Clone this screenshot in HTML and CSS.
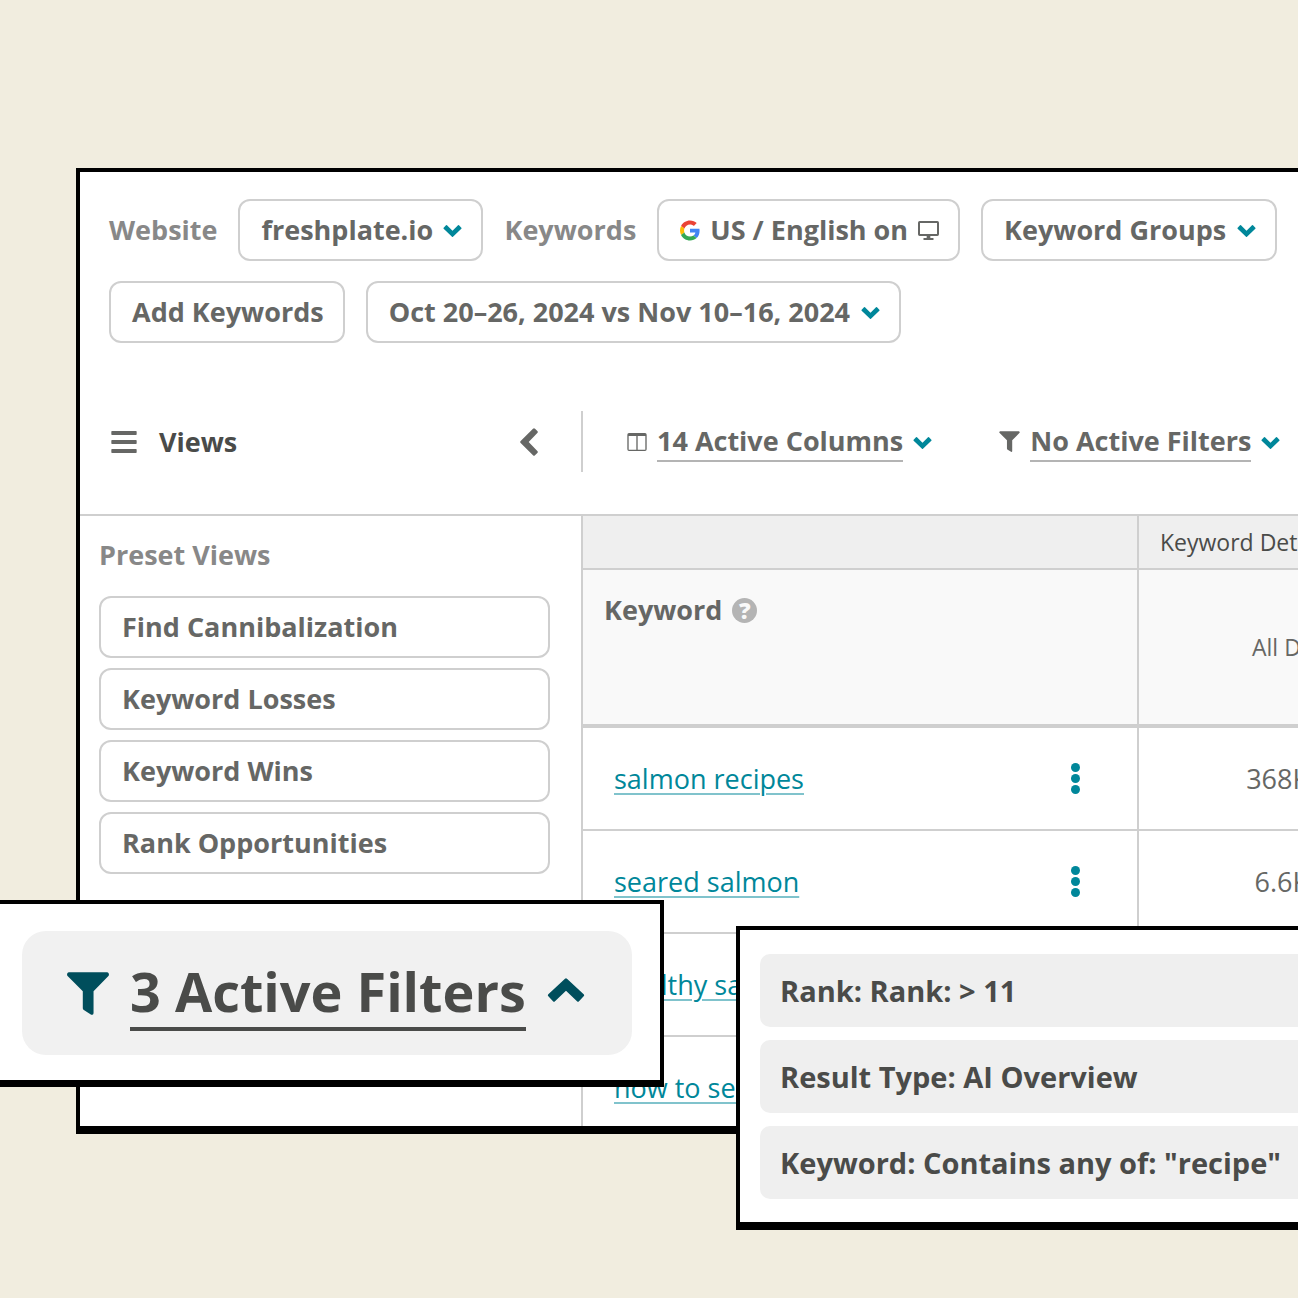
FILE: index.html
```html
<!DOCTYPE html>
<html lang="en">
<head>
  <meta charset="UTF-8">
  <meta name="viewport" content="width=device-width, initial-scale=1.0">
  <title>Keyword Rankings</title>
  <link rel="stylesheet" href="styles.css">
</head>
<body>

  <!-- shared icons -->
  <svg class="sprite" aria-hidden="true">
    <symbol id="chevron" viewBox="0 0 112 72">
      <path d="M3 24 L17 9 Q20 6 23 9 L56 41 L89 9 Q92 6 95 9 L109 24 Q112 27 109 30 L59 77 Q56 80 53 77 L3 30 Q0 27 3 24z" transform="translate(0 -7)"/>
    </symbol>
    <symbol id="funnel" viewBox="0 0 125 128">
      <path d="M5 1 H120 Q127 4 124 11 L79 57 V123 Q78 129 72 127 L49 112 Q47 110 47 107 V57 L1 11 Q-2 4 5 1z"/>
    </symbol>
  </svg>

  <main class="panel">
    <div class="toolbar">
      <label for="website">Website</label>
      <div class="box">
        <select id="website"><option>freshplate.io</option></select>
        <svg class="chevron"><use href="#chevron"/></svg>
      </div>
      <span class="label">Keywords</span>
      <button class="box locale">
        <svg class="google" viewBox="0 0 48 48">
          <path fill="#ea4335" d="M24 9.5c3.54 0 6.71 1.22 9.21 3.6l6.85-6.85C35.9 2.38 30.47 0 24 0 14.62 0 6.51 5.38 2.56 13.22l7.98 6.19C12.43 13.72 17.74 9.5 24 9.5z"/>
          <path fill="#4285f4" d="M46.98 24.55c0-1.57-.15-3.09-.38-4.55H24v9.02h12.94c-.58 2.96-2.26 5.48-4.78 7.18l7.73 6c4.51-4.18 7.09-10.36 7.09-17.65z"/>
          <path fill="#fbbc05" d="M10.53 28.59c-.48-1.45-.76-2.99-.76-4.59s.27-3.14.76-4.59l-7.98-6.19C.92 16.46 0 20.12 0 24c0 3.88.92 7.54 2.56 10.78l7.97-6.19z"/>
          <path fill="#34a853" d="M24 48c6.48 0 11.93-2.13 15.89-5.81l-7.73-6c-2.15 1.45-4.92 2.3-8.16 2.3-6.26 0-11.57-4.22-13.47-9.91l-7.98 6.19C6.51 42.62 14.62 48 24 48z"/>
        </svg>
        US / English on
        <svg class="monitor" viewBox="0 0 63 57">
          <path fill-rule="evenodd" d="M5 0 H58 Q63 0 63 5 V40 Q63 45 58 45 H37 V51 H45 Q47 51 47 54 Q47 57 45 57 H18 Q16 57 16 54 Q16 51 18 51 H26 V45 H5 Q0 45 0 40 V5 Q0 0 5 0z M6 6 V39 H57 V6z"/>
        </svg>
      </button>
      <div class="box">
        <select aria-label="Keyword Groups"><option>Keyword Groups</option></select>
        <svg class="chevron"><use href="#chevron"/></svg>
      </div>
      <button class="box">Add Keywords</button>
      <div class="box">
        <select aria-label="Date range"><option>Oct 20–26, 2024 vs Nov 10–16, 2024</option></select>
        <svg class="chevron"><use href="#chevron"/></svg>
      </div>
    </div>

    <div class="views-bar">
      <div class="views">
        <svg class="burger" viewBox="0 0 76 66">
          <path d="M2 0h72q2 0 2 2v8q0 2-2 2H2q-2 0-2-2V2q0-2 2-2zM2 27h72q2 0 2 2v8q0 2-2 2H2q-2 0-2-2v-8q0-2 2-2zM2 54h72q2 0 2 2v8q0 2-2 2H2q-2 0-2-2v-8q0-2 2-2z"/>
        </svg>
        <h2>Views</h2>
        <button class="collapse" aria-label="Collapse views">
          <svg viewBox="0 0 54 84">
            <path d="M2 39 L39 2 Q42 -1 45 2 L52 9 Q55 12 52 15 L26 42 L52 69 Q55 72 52 75 L45 82 Q42 85 39 82 L2 45 Q-1 42 2 39z"/>
          </svg>
        </button>
      </div>
      <div class="options">
        <button class="option">
          <svg class="columns" viewBox="0 0 58 54">
            <path fill-rule="evenodd" d="M5 0 H53 Q58 0 58 5 V49 Q58 54 53 54 H5 Q0 54 0 49 V5 Q0 0 5 0z M4 9 V50 H27 V9z M31 9 V50 H54 V9z"/>
          </svg>
          <span>14 Active Columns</span>
          <svg class="chevron"><use href="#chevron"/></svg>
        </button>
        <button class="option">
          <svg class="funnel"><use href="#funnel"/></svg>
          <span>No Active Filters</span>
          <svg class="chevron"><use href="#chevron"/></svg>
        </button>
      </div>
    </div>

    <div class="content">
      <aside class="sidebar">
        <h3>Preset Views</h3>
        <button class="box">Find Cannibalization</button>
        <button class="box">Keyword Losses</button>
        <button class="box">Keyword Wins</button>
        <button class="box">Rank Opportunities</button>
      </aside>

      <div class="table-wrap">
        <table>
          <colgroup>
            <col class="col-keyword">
            <col>
          </colgroup>
          <thead>
            <tr class="groups">
              <th></th>
              <th>Keyword Details</th>
            </tr>
            <tr class="heads">
              <th>
                <div class="head">Keyword <span class="help">?</span></div>
              </th>
              <th class="devices">All Devices</th>
            </tr>
          </thead>
          <tbody>
            <tr>
              <td><div class="cell"><a href="#">salmon recipes</a><button class="dots" aria-label="More"><i></i><i></i><i></i></button></div></td>
              <td>368K</td>
            </tr>
            <tr>
              <td><div class="cell"><a href="#">seared salmon</a><button class="dots" aria-label="More"><i></i><i></i><i></i></button></div></td>
              <td>6.6K</td>
            </tr>
            <tr>
              <td><div class="cell"><a href="#">healthy salmon</a><button class="dots" aria-label="More"><i></i><i></i><i></i></button></div></td>
              <td></td>
            </tr>
            <tr>
              <td><div class="cell"><a href="#">how to sear salmon</a><button class="dots" aria-label="More"><i></i><i></i><i></i></button></div></td>
              <td></td>
            </tr>
          </tbody>
        </table>
      </div>
    </div>
  </main>

  <div class="filter-card">
    <button class="filter-pill">
      <svg class="funnel"><use href="#funnel"/></svg>
      <span>3 Active Filters</span>
      <svg class="chevron"><use href="#chevron"/></svg>
    </button>
  </div>

  <ul class="filter-list">
    <li>Rank: Rank: &gt; 11</li>
    <li>Result Type: AI Overview</li>
    <li>Keyword: Contains any of: "recipe"</li>
  </ul>

</body>
</html>
```
FILE: styles.css
```css
* {
  margin: 0;
  padding: 0;
  box-sizing: border-box;
}

body {
  position: relative;
  min-height: 100vh;
  padding: 168px 0 0 76px;
  overflow-x: hidden;
  background-color: #f1eddf;
  font-family: 'Open Sans', sans-serif;
  font-size: 27px;
  line-height: 38px;
  color: #666765;
}

button,
select {
  font: inherit;
  font-weight: bold;
  color: inherit;
  background: none;
  border: none;
  appearance: none;
  white-space: nowrap;
  cursor: pointer;
}

svg {
  flex: none;
  fill: currentColor;
}

.sprite {
  position: absolute;
  width: 0;
  height: 0;
}

.chevron {
  width: 19px;
  height: 12px;
  margin-top: 2px;
  color: #00879a;
}

.funnel {
  width: 21px;
  height: 21px;
}

.panel {
  overflow: hidden;
  background-color: #fff;
  border: 4px solid #000;
  border-right: none;
  border-bottom-width: 8px;
}

/* toolbar */

.toolbar {
  display: flex;
  flex-wrap: wrap;
  align-items: center;
  gap: 20px 21px;
  padding: 27px 0 68px 29px;
}

.toolbar label,
.label {
  font-weight: bold;
  color: #888;
}

.box {
  display: flex;
  align-items: center;
  gap: 10px;
  height: 62px;
  padding: 0 19px 0 21px;
  background-color: #fff;
  border: 2px solid #cfcfcf;
  border-radius: 12px;
}

.google {
  width: 20px;
  height: 21px;
}

.monitor {
  width: 21px;
  height: 19px;
}

/* views bar */

.views-bar {
  display: flex;
  padding-bottom: 42px;
  border-bottom: 2px solid #cfcfcf;
}

.views {
  display: flex;
  flex: none;
  align-items: center;
  width: 503px;
  height: 61px;
  padding: 0 43px 0 31px;
  border-right: 2px solid #cfcfcf;
}

.views h2 {
  margin-left: 22px;
  font-size: 27px;
  color: #4a4b49;
}

.burger {
  width: 26px;
  height: 22px;
}

.collapse {
  display: flex;
  margin-left: auto;
}

.collapse svg {
  width: 18px;
  height: 28px;
}

.options {
  display: flex;
  align-items: center;
  gap: 67px;
  padding-left: 44px;
}

.option {
  display: flex;
  align-items: center;
  gap: 10px;
}

.option span {
  border-bottom: 2px solid #b4b4b4;
}

.columns {
  width: 20px;
  height: 18px;
}

/* sidebar */

.content {
  display: flex;
}

.sidebar {
  flex: none;
  display: flex;
  flex-direction: column;
  gap: 10px;
  width: 503px;
  padding: 20px 31px 20px 19px;
  border-right: 2px solid #cfcfcf;
}

.sidebar h3 {
  margin-bottom: 12px;
  font-size: 27px;
  color: #888;
}

/* table */

.table-wrap {
  flex: 1;
  min-width: 0;
  margin-bottom: -14px;
  overflow: hidden;
}

table {
  width: 100%;
  min-width: 756px;
  table-layout: fixed;
  border-collapse: separate;
  border-spacing: 0;
}

.col-keyword {
  width: 556px;
}

th {
  font-size: 23px;
  font-weight: normal;
  text-align: left;
  white-space: nowrap;
}

th:first-child,
td:first-child {
  border-right: 2px solid #cfcfcf;
}

.groups th {
  height: 54px;
  padding-left: 21px;
  background-color: #efefef;
  border-bottom: 2px solid #cfcfcf;
  color: #4a4b49;
}

.heads th {
  height: 158px;
  padding-left: 21px;
  background-color: #f9f9f9;
  border-bottom: 4px solid #cfcfcf;
}

.heads th:first-child {
  padding-top: 21px;
  vertical-align: top;
}

.heads .devices {
  padding-left: 113px;
}

.head {
  display: flex;
  align-items: center;
  gap: 10px;
  font-size: 27px;
  font-weight: bold;
}

.help {
  width: 25px;
  height: 25px;
  background-color: #b4b4b4;
  border-radius: 50%;
  font-size: 23px;
  font-weight: 800;
  line-height: 25px;
  text-align: center;
  color: #f9f9f9;
}

td {
  height: 103px;
  padding-right: 30px;
  border-bottom: 2px solid #cfcfcf;
  text-align: right;
}

.cell {
  display: flex;
  align-items: center;
  justify-content: space-between;
  padding: 0 27px 0 31px;
}

.cell a {
  color: #00879a;
  text-decoration: underline 2px #80c3cc;
  text-underline-offset: 4px;
}

.dots {
  display: flex;
  flex-direction: column;
  gap: 2px;
}

.dots i {
  width: 9px;
  height: 9px;
  background-color: #00879a;
  border-radius: 50%;
}

/* floating cards */

.filter-card {
  position: absolute;
  top: 900px;
  left: 0;
  padding: 27px 28px 25px 22px;
  background-color: #fff;
  border: 4px solid #000;
  border-left: none;
  border-bottom-width: 7px;
}

.filter-pill {
  display: flex;
  align-items: center;
  gap: 21px;
  height: 124px;
  padding: 0 47px 0 45px;
  background-color: #f1f1f1;
  border-radius: 24px;
  font-size: 54px;
  line-height: 72px;
  color: #4a4b49;
}

.filter-pill span {
  border-bottom: 4px solid #4a4b49;
}

.filter-pill .funnel {
  width: 42px;
  height: 43px;
  color: #004e5c;
}

.filter-pill .chevron {
  width: 38px;
  height: 24px;
  margin: 0 0 6px;
  color: #004e5c;
  transform: rotate(180deg);
}

.filter-list {
  position: absolute;
  top: 926px;
  left: 736px;
  right: 0;
  display: flex;
  flex-direction: column;
  gap: 13px;
  padding: 24px 0 23px 20px;
  background-color: #fff;
  border: 4px solid #000;
  border-right: none;
  border-bottom-width: 8px;
  list-style: none;
}

.filter-list li {
  height: 73px;
  padding-left: 20px;
  background-color: #efefef;
  border-radius: 10px 0 0 10px;
  font-size: 29px;
  font-weight: bold;
  line-height: 73px;
  white-space: nowrap;
  color: #4a4b49;
}
```
